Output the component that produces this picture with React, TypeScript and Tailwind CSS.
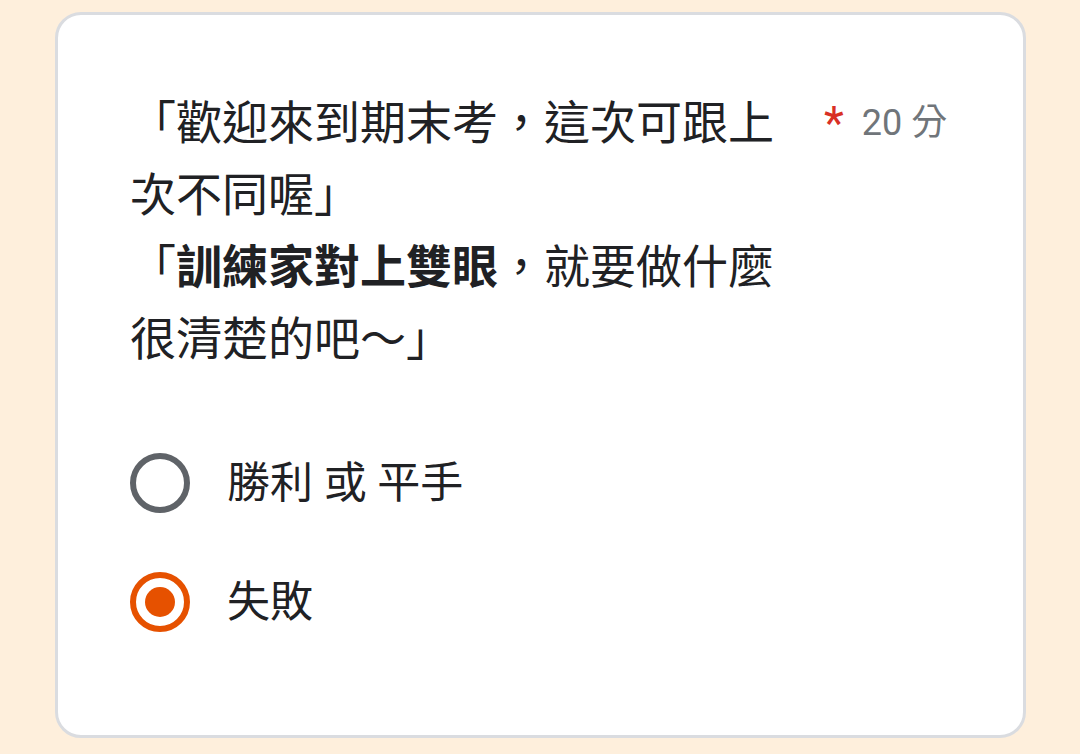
import { useState } from 'react';

const options = ['勝利 或 平手', '失敗'];

export default function App() {
  const [selected, setSelected] = useState(1);

  return (
    <div
      className="min-h-[754px] w-[1080px] bg-[#feefdc] pt-[12px] pl-[55px]"
      style={{ fontFamily: 'Roboto, "Noto Sans CJK TC", sans-serif' }}
    >
      <div className="flex h-[726px] w-[971px] flex-col rounded-[26px] border-[3px] border-[#dadce0] bg-white pl-[72px] pr-[72px] pt-[72px]">
        {/* Question */}
        <div className="flex items-start">
          <div className="w-[656px] text-[46px] leading-[72px] text-[#202124]">
            <p>「歡迎來到期末考，這次可跟上次不同喔」</p>
            <p>
              「<span className="font-bold">訓練家對上雙眼</span>，就要做什麼很清楚的吧～」
            </p>
          </div>
          <div className="ml-[38px] flex items-center pt-[6px]">
            <span className="text-[46px] leading-[60px] text-[#d93025]">*</span>
            <span className="ml-[18px] text-[36px] leading-[60px] text-[#70757a]">20 分</span>
          </div>
        </div>

        {/* Options */}
        <div className="mt-[78px] flex flex-col gap-[59px]">
          {options.map((label, i) => {
            const on = selected === i;
            return (
              <button
                key={label}
                onClick={() => setSelected(i)}
                className="flex h-[60px] items-center text-left"
              >
                <span
                  className={
                    on
                      ? 'flex h-[60px] w-[60px] items-center justify-center rounded-full border-[6px] border-[#e65100]'
                      : 'flex h-[60px] w-[60px] items-center justify-center rounded-full border-[6px] border-[#5f6368]'
                  }
                >
                  {on && <span className="h-[30px] w-[30px] rounded-full bg-[#e65100]" />}
                </span>
                <span className="ml-[37px] text-[43px] leading-[60px] text-[#202124]">{label}</span>
              </button>
            );
          })}
        </div>
      </div>
    </div>
  );
}
